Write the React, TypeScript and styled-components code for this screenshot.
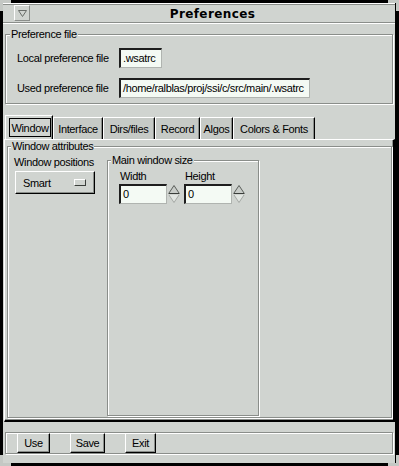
import React from "react";
import styled, { createGlobalStyle } from "styled-components";

const GRAY = "#d0d4d0";
const DARK = "#8a8e8a";
const TAB = "#c6cac6";

const Global = createGlobalStyle`
  html, body { margin: 0; padding: 0; background: #000; }
  body {
    width: 399px; height: 466px; overflow: hidden;
    font-family: "Liberation Sans", Arial, sans-serif;
    font-size: 11px; letter-spacing: -0.35px; color: #000;
  }
  * { box-sizing: border-box; }
`;

const Screen = styled.div`
  position: relative;
  width: 399px;
  height: 466px;
  padding: 3px 0 0 3px;
  background: #000;
`;

const Corner = styled.div<{ $v: "top" | "bottom"; $h: "left" | "right" }>`
  position: absolute;
  width: 11px;
  height: 11px;
  ${(p) => p.$v}: 0;
  ${(p) => p.$h}: 0;
  border-${(p) => p.$v}: 3px solid #c4c8c4;
  border-${(p) => p.$h}: 3px solid #c4c8c4;
`;

const Window = styled.div`
  width: 392px;
  height: 460px;
  background: ${GRAY};
  display: flex;
  flex-direction: column;
`;

const TitleBar = styled.div`
  display: flex;
  align-items: center;
  height: 20px;
  padding-left: 11px;
  border-top: 1px solid #fff;
  border-bottom: 1px solid ${DARK};
  box-shadow: inset 0 1px 0 ${DARK}, 0 1px 0 #fff;
`;

const MenuButton = styled.div`
  width: 16px;
  height: 16px;
  display: flex;
  align-items: center;
  justify-content: center;
  border: 1px solid;
  border-color: #fff ${DARK} ${DARK} #fff;
`;

const Title = styled.div`
  flex: 1;
  text-align: center;
  font-family: "DejaVu Sans", sans-serif;
  font-weight: bold;
  font-size: 12px;
  letter-spacing: 0.4px;
  padding-top: 1px;
`;

const Body = styled.div`
  display: flex;
  flex-direction: column;
  padding-left: 1px;
`;

const Frame = styled.div`
  display: flex;
  flex-direction: column;
  border: 1px solid ${DARK};
  box-shadow: inset 1px 1px 0 #fff, 1px 1px 0 #fff;
`;

const PrefFrame = styled(Frame)`
  margin: 11px 2px 0 1px;
`;

const Legend = styled.span<{ $ml?: number }>`
  align-self: flex-start;
  margin: -7px 0 0 ${(p) => p.$ml ?? 4}px;
  padding: 0 1px;
  height: 13px;
  line-height: 13px;
  background: ${GRAY};
  white-space: nowrap;
`;

const Rows = styled.div`
  display: flex;
  flex-direction: column;
  gap: 10px;
  padding: 7px 0 5px 11px;
`;

const Row = styled.div`
  display: flex;
  align-items: center;
  height: 20px;
`;

const RowLabel = styled.span`
  width: 102px;
  white-space: nowrap;
`;

const Field = styled.div<{ $w: number }>`
  width: ${(p) => p.$w}px;
  height: 20px;
  padding-left: 2px;
  line-height: 17px;
  white-space: nowrap;
  overflow: hidden;
  background: #f4faf4;
  border-style: solid;
  border-width: 2px 1px 1px 2px;
  border-color: #1e1e1e #b0b4b0 #b0b4b0 #1e1e1e;
`;

const TabRow = styled.div`
  display: flex;
  align-items: flex-end;
  height: 24px;
  margin-top: 11px;
  padding-left: 1px;
`;

const Tab = styled.div<{ $active?: boolean; $w: number }>`
  display: flex;
  align-items: center;
  justify-content: ${(p) => (p.$active ? "flex-start" : "center")};
  width: ${(p) => p.$w}px;
  height: ${(p) => (p.$active ? 24 : 22)}px;
  padding: ${(p) => (p.$active ? "0 0 0 3px" : "0")};
  background: ${(p) => (p.$active ? GRAY : TAB)};
  border-top: 1px solid #fff;
  border-left: 1px solid #fff;
  border-right: 1px solid #000;
  box-shadow: inset -1px 0 0 ${DARK};
  white-space: nowrap;
`;

const Focus = styled.span`
  display: flex;
  align-items: center;
  justify-content: center;
  width: 42px;
  height: 19px;
  border: 1px solid #000;
`;

const Panel = styled.div`
  display: flex;
  flex-direction: column;
  height: 283px;
  padding: 6px 1px 2px 2px;
  border-style: solid;
  border-width: 1px 2px 2px 1px;
  border-color: #fff #000 #000 #fff;
  box-shadow: inset -1px -1px 0 ${DARK};
`;

const AttrFrame = styled(Frame)`
  flex: 1;
`;

const AttrContent = styled.div`
  flex: 1;
  display: flex;
  padding: 0 1px 1px 6px;
`;

const LeftCol = styled.div`
  width: 82px;
  margin-right: 11px;
  padding-top: 3px;
  display: flex;
  flex-direction: column;
  align-items: flex-start;
`;

const Caption = styled.span`
  line-height: 13px;
  white-space: nowrap;
`;

const OptionButton = styled.div`
  display: flex;
  align-items: center;
  justify-content: space-between;
  width: 80px;
  height: 23px;
  margin: 2px 0 0 1px;
  padding: 0 8px 0 7px;
  border: 1px solid;
  border-color: #fff #000 #000 #fff;
  box-shadow: inset -1px -1px 0 ${DARK};
`;

const Indicator = styled.span`
  width: 12px;
  height: 7px;
  border: 1px solid;
  border-color: #fff #3a3e3a #3a3e3a #fff;
`;

const SizeFrame = styled(Frame)`
  width: 152px;
  margin-top: 7px;
`;

const SizeRow = styled.div`
  display: flex;
  gap: 4px;
  padding: 3px 0 0 11px;
`;

const SizeCol = styled.div`
  display: flex;
  flex-direction: column;
`;

const SizeLabel = styled.span`
  line-height: 13px;
  margin-left: 1px;
`;

const SpinRow = styled.div`
  display: flex;
  gap: 1px;
  margin-top: 1px;
`;

const ButtonFrame = styled(Frame)`
  margin: 10px 2px 0 1px;
  height: 22px;
  flex-direction: row;
  gap: 20px;
  padding-left: 11px;
`;

const Button = styled.div<{ $w: number }>`
  width: ${(p) => p.$w}px;
  height: 20px;
  display: flex;
  align-items: center;
  justify-content: center;
  border: 1px solid;
  border-color: #fff #000 #000 #fff;
  box-shadow: inset -1px -1px 0 ${DARK};
`;

const MenuGlyph = () => (
  <svg width="9" height="7" viewBox="0 0 9 7">
    <path d="M0.5 0.5 H8.5 L4.5 6.5 Z" fill="none" stroke="#6a6e6a" />
  </svg>
);

const Spin = () => (
  <svg width="12" height="20" viewBox="0 0 12 20">
    <path d="M6 1.5 L1 9 H11 Z" fill="#c8ccc8" />
    <path d="M1 9 L6 1.5 L11 9" fill="none" stroke="#5a5e5a" />
    <path d="M0.5 9.5 H11.5" stroke="#3a3e3a" />
    <path d="M1 11 H11 L6 18.5 Z" fill="#e2e6e2" />
    <path d="M1 11 L6 18.5 L11 11" fill="none" stroke="#a4a8a4" />
  </svg>
);

const tabs: [string, number][] = [
  ["Window", 48],
  ["Interface", 50],
  ["Dirs/files", 52],
  ["Record", 45],
  ["Algos", 33],
  ["Colors & Fonts", 82],
];

const buttons: [string, number][] = [
  ["Use", 33],
  ["Save", 35],
  ["Exit", 31],
];

export default function App() {
  return (
    <Screen>
      <Global />
      <Window>
        <TitleBar>
          <MenuButton>
            <MenuGlyph />
          </MenuButton>
          <Title>Preferences</Title>
        </TitleBar>
        <Body>
          <PrefFrame>
            <Legend>Preference file</Legend>
            <Rows>
              <Row>
                <RowLabel>Local preference file</RowLabel>
                <Field $w={43}>.wsatrc</Field>
              </Row>
              <Row>
                <RowLabel>Used preference file</RowLabel>
                <Field $w={191}>/home/ralblas/proj/ssi/c/src/main/.wsatrc</Field>
              </Row>
            </Rows>
          </PrefFrame>

          <TabRow>
            {tabs.map(([t, w], i) =>
              i === 0 ? (
                <Tab key={t} $w={w} $active>
                  <Focus>{t}</Focus>
                </Tab>
              ) : (
                <Tab key={t} $w={w}>
                  {t}
                </Tab>
              )
            )}
          </TabRow>

          <Panel>
            <AttrFrame>
              <Legend $ml={3}>Window attributes</Legend>
              <AttrContent>
                <LeftCol>
                  <Caption>Window positions</Caption>
                  <OptionButton>
                    <span>Smart</span>
                    <Indicator />
                  </OptionButton>
                </LeftCol>
                <SizeFrame>
                  <Legend $ml={3}>Main window size</Legend>
                  <SizeRow>
                    <SizeCol>
                      <SizeLabel>Width</SizeLabel>
                      <SpinRow>
                        <Field $w={48}>0</Field>
                        <Spin />
                      </SpinRow>
                    </SizeCol>
                    <SizeCol>
                      <SizeLabel>Height</SizeLabel>
                      <SpinRow>
                        <Field $w={48}>0</Field>
                        <Spin />
                      </SpinRow>
                    </SizeCol>
                  </SizeRow>
                </SizeFrame>
              </AttrContent>
            </AttrFrame>
          </Panel>

          <ButtonFrame>
            {buttons.map(([b, w]) => (
              <Button key={b} $w={w}>
                {b}
              </Button>
            ))}
          </ButtonFrame>
        </Body>
      </Window>
      <Corner $v="top" $h="left" />
      <Corner $v="top" $h="right" />
      <Corner $v="bottom" $h="left" />
      <Corner $v="bottom" $h="right" />
    </Screen>
  );
}
